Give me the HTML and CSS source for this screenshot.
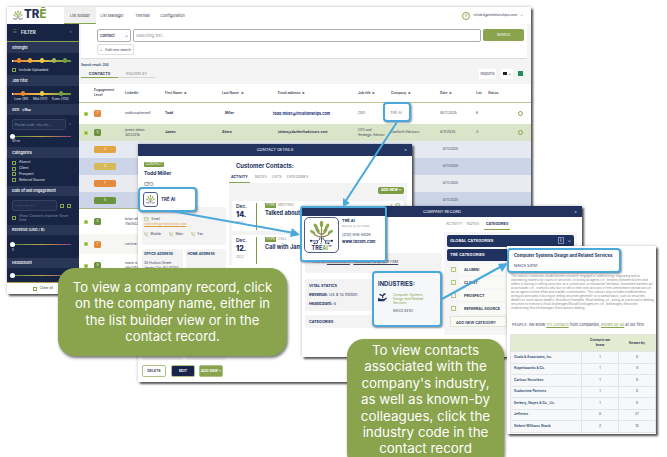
FILE: index.html
```html
<!DOCTYPE html>
<html lang="en">
<head>
  <meta charset="UTF-8">
  <meta name="viewport" content="width=device-width, initial-scale=1.0">
  <title>TRE List Builder</title>
  <link rel="stylesheet" href="styles.css">
</head>
<body>
  <svg width="0" height="0" class="defs">
    <symbol id="tree" viewBox="0 0 36 30">
      <path d="M18 25V9M18 18C14 17 12 14 11 11M18 18C22 17 24 14 25 11M18 21C13 21 10 19 8 17M18 21C23 21 26 19 28 17" fill="none" stroke="#8b8452" stroke-width="1.5"/>
      <path d="M18 22v6M16 22c0 3-2 4-5 4H5M20 22c0 3 2 4 5 4h6M13 26v3H9M23 26v3h4" fill="none" stroke="#24325f" stroke-width="1"/>
      <g fill="#8aa84a">
        <ellipse cx="18" cy="5" rx="2.1" ry="4"/>
        <ellipse cx="11" cy="8" rx="2" ry="3.8" transform="rotate(-30 11 8)"/>
        <ellipse cx="25" cy="8" rx="2" ry="3.8" transform="rotate(30 25 8)"/>
        <ellipse cx="7" cy="15" rx="1.9" ry="3.6" transform="rotate(-60 7 15)"/>
        <ellipse cx="29" cy="15" rx="1.9" ry="3.6" transform="rotate(60 29 15)"/>
        <ellipse cx="14" cy="13" rx="1.5" ry="3" transform="rotate(-25 14 13)"/>
        <ellipse cx="22" cy="13" rx="1.5" ry="3" transform="rotate(25 22 13)"/>
      </g>
      <g fill="#24325f"><circle cx="5" cy="26" r="1.4"/><circle cx="31" cy="26" r="1.4"/><circle cx="9" cy="29" r="1"/><circle cx="27" cy="29" r="1"/></g>
    </symbol>
    <symbol id="phone" viewBox="0 0 10 10">
      <path d="M2 1l2 2-1 1.5L5.500 7 7 6l2 2-1 1.500C4 9 1 6 1 2zM6 1q3 0 3 3" fill="none" stroke="#8faa5c" stroke-width="1"/>
    </symbol>
  </svg>

  <!-- list builder -->
  <div class="window list">
    <div class="topbar">
      <div class="brand"><svg viewBox="0 0 36 30"><use href="#tree"/></svg><b>TR<i>Ē</i></b></div>
      <div class="nav active">List Builder</div>
      <div class="nav">List Manager</div>
      <div class="nav">TREmail</div>
      <div class="nav">Configuration</div>
      <div class="user"><span class="avatar">R</span>richard@trelationships.com <em>⌄</em></div>
    </div>
    <div class="body">
      <div class="sidebar">
        <div class="filter"><span>☷</span><b>FILTER</b><em>‹</em></div>
        <h4>Strength</h4>
        <div class="sec strength">
          <div class="scale five"><i></i><i></i><i></i><i></i><i></i></div>
          <label><s></s>Include Uploaded</label>
        </div>
        <h4>Job Title</h4>
        <div class="sec job">
          <div class="scale three"><i></i><i></i><i></i></div>
          <div class="marks"><span>Low (91)</span><span>Mid (117)</span><span>Exec (110)</span></div>
        </div>
        <h4>Geo &nbsp; <small>⚲ Map</small></h4>
        <div class="sec geo">
          <div class="field"><span>Postal code, city etc...</span><em>+</em></div>
          <div class="slider"></div>
          <small>50 mi</small>
        </div>
        <h4>Categories</h4>
        <div class="sec cats">
          <label><s></s>Alumni</label>
          <label><s></s>Client</label>
          <label><s></s>Prospect</label>
          <label><s></s>Referral Source</label>
        </div>
        <h4 class="low">Date of last engagement</h4>
        <div class="sec date">
          <div class="field"><span>-- / -- / ----</span><u></u><u></u></div>
          <label><s></s>Show Contacts Inactive Since<br>Date</label>
        </div>
        <h4 class="low">Revenue (USD / $)</h4>
        <div class="sec revenue"><div class="slider"></div><small>0</small></div>
        <h4 class="low">Headcount</h4>
        <div class="sec head"><div class="slider"></div></div>
        <div class="clear"><u></u>Clear all</div>
      </div>
      <div class="main">
        <div class="search">
          <div class="searchRow">
            <div class="select">Contact <em>⌄</em></div>
            <div class="input">Searching text...</div>
            <div class="searchBtn">SEARCH</div>
          </div>
          <div class="addSearch">+ &nbsp; Add new search</div>
        </div>
        <div class="results">Search result: 350</div>
        <div class="tabs">
          <b>CONTACTS</b><span>KNOWN BY</span>
          <div class="tools"><div class="reports">Reports</div><div class="folder"><i></i>⌄</div><div class="excel"></div></div>
        </div>
        <div class="row th">
          <span></span><span>Engagement<br>Level</span><span>LinkedIn</span><span>First Name &nbsp;⇅</span><span>Last Name &nbsp;⇅</span><span>Email address &nbsp;⇅</span><span>Job title &nbsp;⇅</span><span>Company &nbsp;⇅</span><span>Date &nbsp;⇅</span><span>List</span><span>Status</span>
        </div>
        <div class="row r1">
          <i class="dot"></i><i class="badge orange">7</i><span>toddcoupleswell</span><b>Todd</b><b class="in">Miller</b><b class="mail">todd.miller@trelationships.com</b><span>CEO</span><span></span><span>08.11.2025</span><span>6</span><span></span><i class="face"></i>
        </div>
        <div class="row r2">
          <i class="dot"></i><i class="badge green">5</i><span>james-aitero<br>3012321b</span><b>James</b><b>Aitero</b><b>jaitero@danforthadvisors.com</b><span>CFO and<br>Strategic Advisor</span><span>Danforth Advisors</span><span>8/11/2025</span><span>3</span><span></span><i class="face"></i>
        </div>
        <div class="row r3"><i class="wide amber">3</i><span class="when">8/11/2025</span></div>
        <div class="row r4"><i class="wide gold">3</i><span class="when">8/11/2025</span></div>
        <div class="row r5"><i class="wide orange">7</i><span class="when">8/11/2025</span></div>
        <div class="row r6"><i class="wide green">5</i><span class="when">8/11/2025</span></div>
        <div class="row r7"><i class="dot"></i><i class="badge green">5</i><span>brian-allen<br>75b1502</span></div>
        <div class="row r8"><i class="dot"></i><i class="badge orange">7</i><span>corinne</span></div>
        <div class="row r9"><i class="dot"></i><i class="badge green">5</i><span>maria-a<br>d8e2144</span></div>
      </div>
    </div>
  </div>

  <!-- contact details -->
  <div class="window contact">
    <div class="title">CONTACT DETAILS<em>×</em></div>
    <div class="cols">
      <div class="left">
        <span class="tag">CONTACT</span>
        <h3>Todd Miller</h3>
        <p class="role">CEO</p>
        <div class="card info">
          <b>CONTACT</b>
          <div class="email"><svg viewBox="0 0 10 8"><path d="M.5.500h9v7h-9zL5 4 9.500.5" fill="none" stroke="#8faa5c"/></svg> Email</div>
          <a>todd.miller@trelationships.com</a>
          <div class="phones"><span><svg><use href="#phone"/></svg>Mobile</span><span><svg><use href="#phone"/></svg>Main</span><span><svg><use href="#phone"/></svg>Fax</span></div>
        </div>
        <div class="addresses">
          <div class="card"><b>OFFICE ADDRESS</b><p>30 Hudson Street<br>Jersey City, NJ 07302</p></div>
          <div class="card"><b>HOME ADDRESS</b></div>
        </div>
        <div class="actions"><span>DELETE</span><span class="navy">EDIT</span><span class="lime">ADD NEW +</span></div>
      </div>
      <div class="right">
        <h2>Customer Contacts:</h2>
        <div class="subtabs"><b>ACTIVITY</b><span>NOTES</span><span>LISTS</span><span>CATEGORIES</span></div>
        <div class="feed">
          <div class="addNew">ADD NEW +</div>
          <div class="event"><div class="day">Dec.<b>14.</b><small>2023</small></div><div class="what"><i>TYPE</i> MEETING<b>Talked about</b></div><span class="marksR">✓ ⚲</span></div>
          <div class="event"><div class="day">Dec.<b>12.</b><small>2023</small></div><div class="what"><i>TYPE</i> CALL<b>Call with Jam</b></div></div>
        </div>
      </div>
    </div>
  </div>

  <!-- company record -->
  <div class="window company">
    <div class="title">COMPANY RECORD<em>×</em></div>
    <div class="cols">
      <div class="left">
        <div class="card people">PEOPLE: <u>10 CONTACTS</u> - <u>KNOWN BY 12 @ OUR FIRM</u></div>
        <div class="card vital"><b>VITAL STATICS</b><p><b>Revenue:</b> US $ 10 million</p><p><b>Headcount:</b> 6</p></div>
        <div class="card small"><b>CATEGORIES</b></div>
      </div>
      <div class="right">
        <div class="subtabs"><span>ACTIVITY</span><span>NOTES</span><b>CATEGORIES</b></div>
        <div class="catPanel">
          <div class="bar">GLOBAL CATEGORIES<em><i>i</i>⌄</em></div>
          <div class="bar">TRĒ CATEGORIES</div>
          <div class="cat"><s></s><b>ALUMNI</b></div>
          <div class="cat"><s></s><b>CLIENT</b></div>
          <div class="cat"><s></s><b>PROSPECT</b></div>
          <div class="cat"><s></s><b>REFERRAL SOURCE</b></div>
          <div class="addCat">ADD NEW CATEGORY</div>
        </div>
      </div>
    </div>
  </div>

  <!-- industry page -->
  <div class="window industry">
    <p class="desc">This industry comprises establishments primarily engaged in underwriting, originating and/or maintaining markets for issues of securities, or acting as agents (i.e., brokers) between buyers and sellers in buying or selling securities on a commission or transaction fee basis. Investment bankers act as principals (i.e., investors who buy or sell on their own account) in firm commitment transactions or act as agents in best effort and standby commitments. This industry also includes establishments acting as principals in buying or selling securities generally on a spread basis, such as securities dealers or stock option dealers. Illustrative Examples: Bond dealing (i.e., acting as a principal in dealing securities to investors) Stock brokerages Mutual fund agencies (i.e., brokerages) Securities underwriting Stock brokerages Stock options dealing</p>
    <p class="know">PEOPLE: We know <u>172 contacts</u> from companies, <u>known by 80</u> at our firm</p>
    <table>
      <tr><th></th><th>Contacts we<br>know</th><th>Known by</th></tr>
      <tr><td>Goala &amp; Associates, Inc.</td><td>1</td><td>0</td></tr>
      <tr><td>Kippelasantis &amp; Co.</td><td>1</td><td>4</td></tr>
      <tr><td>Carlzoo Securities</td><td>1</td><td>0</td></tr>
      <tr><td>Scalarview Partners</td><td>1</td><td>0</td></tr>
      <tr><td>Berkery, Noyes &amp; Co., Llc</td><td>1</td><td>0</td></tr>
      <tr><td>Jefferies</td><td>8</td><td>27</td></tr>
      <tr><td>Siebert Williams Shank</td><td>2</td><td>10</td></tr>
    </table>
  </div>

  <!-- highlighted areas -->
  <div class="focus name">TRĒ AI</div>
  <div class="focus contactCo"><svg class="logoBox" viewBox="-3 -3 42 38"><use href="#tree" width="36" height="30"/></svg><b>TRĒ AI</b></div>
  <div class="focus companyCo">
    <div class="logoBox"><svg viewBox="0 0 36 30"><use href="#tree"/></svg><b>TRĒ<i>AI</i>™</b></div>
    <div class="lines"><b>TRĒ AI</b><small>DALLAS, AL, NY 75204</small><span>(212) 616-5626</span><b class="web">www.tbcom.com</b></div>
  </div>
  <div class="focus naics">
    <b>INDUSTRIES:</b>
    <div class="code">
      <svg viewBox="0 0 12 12"><path d="M0 7h2l2 1h4l3-2 1 1-4 4H0z M5.500 7V4L2 3V1l3 1 1 1 1-2 3-1v2L7 4v3z" fill="#24325f"/></svg>
      <div><span>Computer Systems<br>Design and Related<br>Services</span><em>NAICS 54151</em></div>
    </div>
  </div>
  <div class="focus service"><b>Computer Systems Design and Related Services</b><span>NAICS 54151</span></div>

  <svg class="arrows" viewBox="0 0 667 457">
    <path class="line" d="M397 122L345 202M171 211L294 233M442 299L502 266"/>
    <path class="tip" d="M343 207l0-9 7 5zM300 235l-10 2 2-9zM508 263l-10 1 4 8z"/>
  </svg>

  <div class="bubble first">To view a company record, click<br>on the company name, either in<br>the list builder view or in the<br>contact record.</div>
  <div class="bubble second">To view contacts<br>associated with the<br>company's industry,<br>as well as known-by<br>colleagues, click the<br>industry code in the<br>contact record</div>
</body>
</html>
```
FILE: styles.css
```css
* {
  box-sizing: border-box;
}

body {
  margin: 0;
  height: 457px;
  position: relative;
  overflow: hidden;
  background: #fff;
  font-family: Inter, "Liberation Sans", sans-serif;
  font-size: 3.8px;
  line-height: 5px;
  color: #3b4257;
}

h2, h3, h4, p {
  margin: 0;
}

i, em {
  font-style: normal;
}

.defs {
  position: absolute;
}

.window {
  position: absolute;
  background: #fff;
  box-shadow: 2px 2px 2px #555, 0 0 3px #0004;
  overflow: hidden;
}

.list {
  left: 7px;
  top: 7px;
  width: 524px;
  height: 287px;
}

.contact {
  left: 138px;
  top: 144px;
  width: 274px;
  height: 238px;
}

.company {
  left: 302px;
  top: 206px;
  width: 280px;
  height: 151px;
}

.industry {
  left: 507px;
  top: 246px;
  width: 149px;
  height: 188px;
  padding: 27px 0 0 3px;
}

/* top bar */
.topbar {
  display: flex;
  height: 17px;
}

.brand {
  display: flex;
  width: 57px;
  padding: 1px 0 0 5px;
  color: #24325f;
}

.brand svg {
  width: 12px;
  height: 14px;
}

.brand b {
  font-size: 11.5px;
  line-height: 13px;
  font-weight: 800;
}

.brand i {
  color: #789c34;
}

.nav {
  width: 32px;
  padding-top: 6px;
  text-align: center;
}

.nav.active {
  background: #f0f0f0;
  border-bottom: 1px solid #8aa34d;
}

.nav:nth-child(4) {
  width: 29px;
}

.nav:nth-child(5) {
  width: 31px;
}

.user {
  display: flex;
  align-items: center;
  gap: 3px;
  margin-left: auto;
  padding-right: 8px;
  font-size: 3.4px;
}

.avatar {
  width: 8px;
  height: 8px;
  border: 1px solid #8aa34d;
  border-radius: 50%;
  text-align: center;
  line-height: 6px;
  color: #789c34;
}

.body {
  display: flex;
  height: 270px;
}

/* filters */
.sidebar {
  width: 72px;
  height: 270px;
  background: #172443;
  color: #e2e5ec;
  font-size: 3.5px;
}

.filter {
  display: flex;
  align-items: center;
  gap: 4px;
  height: 18px;
  padding: 0 8px 0 6px;
  border-bottom: 1px solid #8aa34d;
}

.filter b {
  font-size: 4.5px;
}

.filter span {
  color: #8aa34d;
}

.filter em {
  margin-left: auto;
}

.sidebar h4 {
  height: 11px;
  padding-left: 5px;
  background: #2a3655;
  font-size: 3.7px;
  line-height: 11px;
}

.sidebar h4.low {
  height: 10px;
  line-height: 10px;
}

.sidebar small {
  font-size: 3px;
}

/* flow-root keeps the slider margins inside the section */
.sec {
  display: flow-root;
  padding: 0 8px 0 5px;
}

.strength { height: 22px; }
.job { height: 18px; }
.geo { height: 32px; }
.cats { height: 28px; padding-top: 2px; }
.date { height: 29px; }
.revenue { height: 23px; }
.head { height: 14px; }

.scale {
  display: flex;
  align-items: center;
  justify-content: space-around;
  height: 2px;
  margin-top: 6.5px;
  background: linear-gradient(90deg, #e07c32, #ecc04c 50%, #64983c);
  border-left: 1px solid #fff;
}

.scale i {
  width: 4px;
  height: 5px;
  border-radius: 2px;
  background: #e88a35;
}

.five i:nth-child(2) { background: #eeae3e; }
.five i:nth-child(3), .three i:nth-child(2) { background: #eecb4a; }
.five i:nth-child(4) { background: #9dbc54; }
.five i:nth-child(5), .three i:nth-child(3) { background: #6ea044; }

.sec label {
  display: flex;
  align-items: center;
  gap: 3px;
  height: 5.8px;
}

.sec s {
  flex: none;
  width: 4px;
  height: 4px;
  border: 0.8px solid #8aa34d;
}

.strength label {
  margin-top: 6px;
}

.marks {
  display: flex;
  justify-content: space-around;
  margin-top: 2px;
}

.field {
  display: flex;
  align-items: center;
  gap: 3px;
  height: 11px;
  color: #8791a8;
}

.field span {
  flex: 1;
  height: 11px;
  padding-left: 2px;
  border: 0.5px solid #35415f;
  border-radius: 2px;
  background: #202d4d;
  line-height: 10px;
}

.geo .field {
  margin-top: 4px;
}

.field u, .clear u {
  width: 4px;
  height: 4px;
  border: 0.7px solid #8aa34d;
}

.date {
  padding-top: 4px;
}

.date label {
  height: 11px;
  padding-top: 3px;
  color: #8791a8;
  line-height: 4px;
}

.slider {
  height: 1px;
  margin-top: 9px;
  background: linear-gradient(90deg, #568d3b, #bba34a, #9c3f76);
}

.geo .slider {
  margin: 6px 0 2px;
}

.revenue .slider {
  margin-bottom: 3px;
}

.head .slider {
  margin-top: 6.5px;
}

.slider::before {
  content: "";
  display: block;
  width: 5px;
  height: 5px;
  border-radius: 50%;
  background: #fff;
  transform: translate(-2px, -2px);
}

.geo small, .revenue small {
  display: block;
  line-height: 4px;
}

.clear {
  display: flex;
  justify-content: center;
  align-items: center;
  gap: 3px;
  height: 12px;
  border-top: 1px solid #b79b4b;
  background: #fff;
  color: #3b4257;
}

/* search */
.main {
  flex: 1;
  padding-left: 2px;
  background: #f4f4f5;
}

.search {
  height: 35px;
  margin: 0 4px 0 0;
  padding: 5px 3px 0 16px;
  border-bottom: 1px solid #ddd;
  background: #fff;
}

.searchRow {
  display: flex;
  gap: 2px;
  height: 13px;
}

.select, .input {
  border: 1px solid #a9adb5;
  border-radius: 2px;
  padding: 3px 2px;
}

.select {
  display: flex;
  justify-content: space-between;
  width: 34px;
  font-weight: 600;
}

.input {
  flex: 1;
  color: #8b8f99;
}

.searchBtn {
  width: 41px;
  height: 12px;
  border-radius: 2px;
  background: #8aa34d;
  color: #fff;
  text-align: center;
  font-size: 3.3px;
  line-height: 12px;
}

.addSearch {
  width: 37px;
  height: 11px;
  margin-top: 2px;
  border: 0.5px solid #ddd;
  border-radius: 2px;
  text-align: center;
  font-size: 3.4px;
  line-height: 10px;
}

.results {
  height: 8px;
  padding-top: 4px;
  font-size: 3.1px;
  font-weight: 600;
  color: #24325f;
}

.tabs {
  display: flex;
  height: 17px;
  text-align: center;
}

.tabs b, .tabs > span {
  width: 37px;
  height: 11px;
  padding-top: 4px;
  border-bottom: 1px solid #8aa34d;
}

.tabs > span {
  border-color: #d6d6d6;
  color: #888;
}

.tools {
  display: flex;
  gap: 5px;
  margin-left: auto;
  padding: 2px 8px 0 0;
}

.tools > div {
  height: 10px;
  background: #fff;
  line-height: 10px;
}

.reports {
  width: 17px;
}

.folder {
  width: 12px;
}

.folder i {
  display: inline-block;
  width: 4px;
  height: 3px;
  margin-right: 2px;
  background: #222;
}

.tools .excel {
  width: 5px;
  height: 5px;
  margin: 2px 0 0;
  background: #258b5d;
}

/* contacts table */
.row {
  display: grid;
  grid-template-columns: 10px 31px 40px 57px 56px 80px 33px 49px 36px 12px 30px 6px;
  align-items: center;
  margin-left: -2px;
  padding-left: 5px;
  font-size: 3.3px;
  line-height: 5px;
}

.th {
  height: 19px;
  border-bottom: 1px solid #b5c78d;
  background: #fff;
  font-weight: 600;
}

.r1 { height: 21px; background: #fff; }
.r2 { height: 17px; background: #dae4c8; }
.r3, .r4, .r5, .r6 { display: flex; justify-content: space-between; padding: 0 73px 0 15px; }
.r3 { height: 17px; background: #e5e9f1; }
.r4 { height: 17px; background: #ccd5e8; }
.r5 { height: 17px; background: #e9ebf1; }
.r6 { height: 17px; background: #ccd5e8; border-bottom: 1px solid #a8b887; }
.r7 { height: 25px; background: #fff; }
.r8 { height: 20px; background: #f6f7f2; }
.r9 { height: 23px; background: #fff; }

.in {
  padding-left: 3px;
}

.mail {
  margin-left: -5px;
  color: #24327c;
  font-size: 3.7px;
}

.dot {
  width: 4px;
  height: 4px;
  border: 1px solid #b6d56a;
  background: #80a832;
}

.badge, .wide {
  width: 7px;
  height: 7px;
  border-radius: 1.5px;
  color: #fff;
  text-align: center;
  line-height: 7px;
}

.wide {
  width: 22px;
}

.orange { background: #e38a3d; }
.green { background: #6b9440; }
.amber { background: #e2a543; }
.gold { background: #d7b957; }

.face {
  width: 5px;
  height: 5px;
  border: 0.7px solid #8aa34d;
  border-radius: 50%;
}

/* record windows */
.title {
  position: relative;
  height: 12px;
  background: #22335f;
  color: #fff;
  text-align: center;
  font-size: 4px;
  line-height: 12px;
}

.title em {
  position: absolute;
  right: 5px;
}

.cols {
  display: flex;
}

.card {
  background: #f3f3f4;
  border-radius: 2px;
}

.contact .left {
  width: 91px;
  padding: 6px 3px 0 4px;
}

.tag {
  display: block;
  width: 20px;
  height: 5px;
  margin-left: 2px;
  border-radius: 1px;
  background: #7d9d45;
  color: #fff;
  text-align: center;
  font-size: 3.5px;
}

.left h3 {
  margin: 3px 0 0 2px;
  font-size: 5px;
  line-height: 7px;
  color: #24325f;
}

.role {
  margin: 5px 0 0 2px;
  font-size: 4.5px;
}

.info {
  height: 38px;
  margin-top: 20px;
  padding: 2px;
  font-size: 3.3px;
}

.info svg {
  width: 4.5px;
  height: 4.5px;
  margin-right: 2px;
  vertical-align: middle;
}

.email {
  margin-top: 3px;
}

.info a {
  display: block;
  color: #e09b3c;
  font-size: 2.9px;
  text-decoration: underline;
}

.phones {
  display: flex;
  gap: 8px;
  margin-top: 5px;
}

.addresses {
  display: flex;
  gap: 3px;
  margin-top: 4px;
}

.addresses .card {
  width: 42px;
  height: 111px;
  padding: 3px 2px;
  font-size: 3.4px;
}

.addresses b {
  color: #24446f;
  white-space: nowrap;
}

.addresses p {
  margin-top: 4px;
  font-size: 3.3px;
  white-space: nowrap;
}

.actions {
  display: flex;
  gap: 4px;
  margin-top: 5px;
}

.actions span {
  width: 24px;
  height: 12px;
  border: 0.7px solid #aebf86;
  border-radius: 2px;
  text-align: center;
  font-size: 3.6px;
  font-weight: 600;
  line-height: 11px;
}

.actions .navy {
  margin-left: 1px;
  background: #17234a;
  color: #fff;
}

.actions .lime {
  background: #8aa34d;
  color: #fff;
}

.contact .right {
  flex: 1;
}

.right h2 {
  margin: 6px 0 0 7px;
  font-size: 5.9px;
  line-height: 8px;
  color: #24325f;
}

.subtabs {
  display: flex;
  gap: 5px;
  height: 13px;
  padding-top: 5px;
  font-size: 3.5px;
  color: #777;
}

.subtabs b {
  color: #24325f;
  border-bottom: 1px solid #8aa34d;
  padding: 0 2px;
}

.feed {
  width: 178px;
  height: 82px;
  padding: 4px 3px;
  background: #f3f3f4;
}

.addNew {
  width: 26px;
  height: 7px;
  margin: 0 0 7px auto;
  border-radius: 2px;
  background: #7d9d45;
  color: #fff;
  text-align: center;
  font-size: 3.5px;
  font-weight: bold;
  line-height: 7px;
}

.event {
  display: flex;
  height: 30px;
  margin-bottom: 4px;
  padding: 2px 4px;
  background: #fff;
  color: #24325f;
}

.day {
  width: 21px;
  height: 27px;
  border-right: 1px solid #7d9d45;
  font-size: 5px;
  font-weight: 600;
  line-height: 7px;
}

.day b {
  display: block;
  font-size: 7px;
  line-height: 10px;
}

.day small {
  display: block;
  font-size: 3px;
  color: #aaa;
}

.what {
  flex: 1;
  padding-left: 8px;
  font-size: 3.5px;
  color: #888;
}

.what i {
  display: inline-block;
  width: 11px;
  margin-right: 1px;
  background: #7d9d45;
  color: #fff;
  text-align: center;
}

.what b {
  display: block;
  margin-top: 3px;
  font-size: 5.6px;
  color: #24325f;
}

.marksR {
  color: #7d9d45;
  font-size: 7px;
}

/* company record */
.company .title {
  height: 11px;
  line-height: 11px;
}

.company .left {
  width: 142px;
  padding: 36px 2px 0 3px;
}

.people {
  height: 20px;
  padding: 7px 7px;
  font-size: 3.4px;
}

.vital {
  height: 32px;
  margin-top: 6px;
  padding: 4px;
}

.vital p {
  margin-top: 4px;
  font-size: 4.1px;
}

.vital b, .small b {
  color: #24325f;
}

.small {
  height: 13px;
  margin-top: 4px;
  padding: 4px;
}

.company .subtabs {
  padding: 5px 0 0 2px;
}

.catPanel {
  width: 133px;
  height: 103px;
  margin-top: 2px;
  padding: 3px 3px;
  background: #f5f5f5;
}

.bar {
  display: flex;
  justify-content: space-between;
  height: 12px;
  margin-bottom: 2px;
  padding: 0 3px;
  border-radius: 2px;
  background: #20325f;
  color: #fff;
  font-size: 4.1px;
  font-weight: 600;
  line-height: 12px;
}

.bar i {
  margin-right: 4px;
  border: 0.6px solid #8290b5;
  padding: 0 1.5px;
}

.cat {
  display: flex;
  align-items: center;
  gap: 3px;
  height: 13px;
  padding-left: 4px;
}

.cat s {
  width: 5px;
  height: 5px;
  border: 0.7px solid #b4c87c;
}

.cat b, .addCat {
  width: 48px;
  height: 11px;
  padding-left: 5px;
  background: #fafbf7;
  color: #333d58;
  font-size: 3.8px;
  line-height: 11px;
}

.addCat {
  width: 57px;
  margin: 1px 0 0 3px;
  border: 0.5px solid #e0e6cf;
  font-weight: 600;
}

/* industry */
.desc {
  width: 145px;
  height: 41px;
  padding: 1px 1px 0;
  color: #888;
  font-size: 2.95px;
  line-height: 4px;
}

.know {
  height: 20px;
  padding: 8px 0 0 2px;
  font-size: 3.8px;
  white-space: nowrap;
}

.know u {
  color: #8aa34d;
}

table {
  width: 146px;
  border-collapse: collapse;
  table-layout: fixed;
}

th, td {
  height: 11.5px;
  padding: 0 3px;
  border: 0.5px solid #e1e4e8;
  background: #f7f8f9;
  text-align: center;
  font-size: 3.3px;
  line-height: 5px;
}

th {
  width: 37px;
  height: 17px;
  background: #e3ecd1;
}

th:first-child {
  width: 71px;
}

td:first-child {
  text-align: left;
  font-weight: 600;
  color: #24446f;
}

/* highlights */
.focus {
  position: absolute;
  border: 2px solid #4aa8dc;
  border-radius: 4px;
  background: #fff;
  box-shadow: 1px 1px 2px #0006;
  color: #24325f;
}

.name {
  left: 383px;
  top: 102px;
  width: 28px;
  height: 20px;
  padding: 6px 5px;
  color: #777;
}

.contactCo {
  display: flex;
  align-items: center;
  gap: 3px;
  left: 138px;
  top: 187px;
  width: 59px;
  height: 25px;
  padding-left: 3px;
  font-size: 4.5px;
}

.logoBox {
  border: 0.7px solid #4c5c8d;
  border-radius: 3px;
}

.contactCo svg {
  width: 15px;
  height: 15px;
}

.companyCo {
  display: flex;
  gap: 3px;
  left: 300px;
  top: 206px;
  width: 87px;
  height: 56px;
  padding: 9px 2px 0;
  border-radius: 3px;
  background: linear-gradient(#22335f 8px, #fff 8px);
}

.companyCo .logoBox {
  width: 35px;
  height: 36px;
  border-radius: 5px;
  text-align: center;
}

.companyCo svg {
  display: block;
  width: 29px;
  height: 26px;
  margin: 1px auto 0;
}

.companyCo .logoBox b {
  display: block;
  font-size: 5.5px;
  line-height: 6px;
}

.logoBox i {
  color: #8aa34d;
}

.lines b, .lines span, .lines small {
  display: block;
  font-size: 4px;
  line-height: 6px;
}

.lines small {
  color: #888;
  font-size: 2.5px;
}

.lines span {
  margin-top: 2px;
}

.lines b {
  margin-top: 1px;
}

.naics {
  left: 372px;
  top: 271px;
  width: 70px;
  height: 56px;
  padding: 7px 4px;
  background: #f5f7f9;
  font-size: 5.8px;
  line-height: 8px;
}

.code {
  display: flex;
  gap: 6px;
  margin-top: 5px;
}

.code svg {
  width: 9px;
  height: 9px;
}

.code span, .code em {
  display: block;
  color: #8aa34d;
  font-size: 3.3px;
  line-height: 4px;
}

.code em {
  margin-top: 4px;
  color: #3b4257;
}

.service {
  left: 507px;
  top: 248px;
  width: 114px;
  height: 25px;
  padding: 3px 5px;
  white-space: nowrap;
}

.service b, .service span {
  display: block;
  font-size: 4.2px;
  line-height: 6px;
}

.service span {
  margin-top: 4px;
  font-size: 3.9px;
}

.arrows {
  position: absolute;
  left: 0;
  top: 0;
  width: 667px;
  height: 457px;
}

.line {
  fill: none;
  stroke: #4aa8dc;
  stroke-width: 2;
}

.tip {
  fill: #4aa8dc;
}

/* green notes */
.bubble {
  position: absolute;
  border-radius: 17px;
  background: #8aa34d;
  box-shadow: 1px 2px 3px #0008;
  color: #fff;
  text-align: center;
  white-space: nowrap;
  font-size: 13.4px;
  line-height: 16.4px;
}

.first {
  left: 58px;
  top: 268px;
  width: 229px;
  height: 88px;
  padding-top: 11px;
  font-size: 13.1px;
}

.second {
  left: 347px;
  top: 339px;
  width: 157px;
  height: 130px;
  padding-top: 3px;
}
```
